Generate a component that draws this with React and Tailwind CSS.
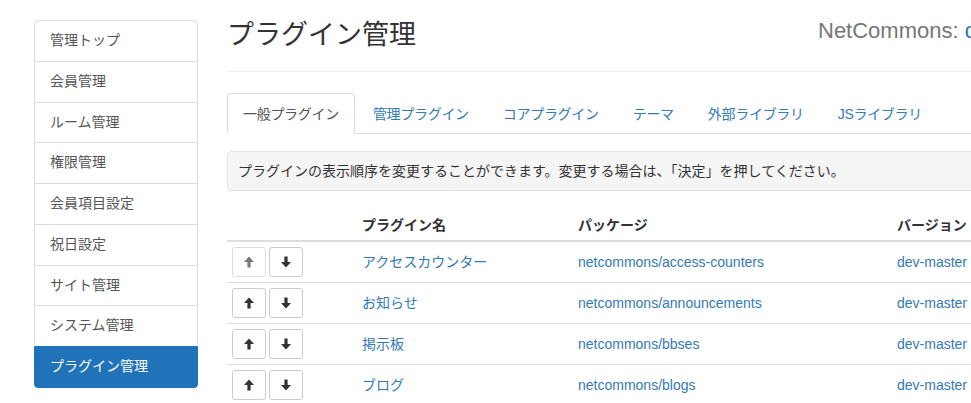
import React from 'react'

const menu = [
  '管理トップ',
  '会員管理',
  'ルーム管理',
  '権限管理',
  '会員項目設定',
  '祝日設定',
  'サイト管理',
  'システム管理',
  'プラグイン管理',
]

const tabs = ['一般プラグイン', '管理プラグイン', 'コアプラグイン', 'テーマ', '外部ライブラリ', 'JSライブラリ']

const plugins = [
  { name: 'アクセスカウンター', pkg: 'netcommons/access-counters', version: 'dev-master' },
  { name: 'お知らせ', pkg: 'netcommons/announcements', version: 'dev-master' },
  { name: '掲示板', pkg: 'netcommons/bbses', version: 'dev-master' },
  { name: 'ブログ', pkg: 'netcommons/blogs', version: 'dev-master' },
]

const ArrowIcon = ({ down }) => (
  <svg width="12" height="12" viewBox="0 0 12 12" className={down ? 'rotate-180' : ''}>
    <polygon points="6,0.5 11,6 7.6,6 7.6,11.5 4.4,11.5 4.4,6 1,6" fill="currentColor" />
  </svg>
)

const MoveButton = ({ down, disabled }) => (
  <button
    className={`w-[34px] h-[30px] flex items-center justify-center bg-white border border-[#ccc] rounded-[3px] text-[#333] ${
      disabled ? 'opacity-[0.65]' : ''
    }`}
  >
    <ArrowIcon down={down} />
  </button>
)

const App = () => {
  return (
    <div className="w-[971px] h-[403px] overflow-hidden bg-white text-[14px] leading-[20px] text-[#333] font-['Liberation_Sans','Noto_Sans_CJK_JP',sans-serif]">
      <div className="flex pt-[20px]">
        <aside className="ml-[34px] w-[164px] shrink-0">
          {menu.map((item, i) => {
            const active = i === menu.length - 1
            return (
              <div
                key={item}
                className={`relative px-[15px] py-[10px] leading-[19.75px] border ${i > 0 ? '-mt-px' : ''} ${
                  i === 0 ? 'rounded-t-[4px]' : ''
                } ${
                  active
                    ? 'z-10 rounded-b-[4px] bg-[#2072b9] border-[#2072b9] text-white'
                    : 'bg-white border-[#ddd] text-[#555]'
                }`}
              >
                {item}
              </div>
            )
          })}
        </aside>

        <main className="ml-[29px] w-[900px] shrink-0">
          <div className="flex items-start border-b border-[#eee] pb-[20px]">
            <h1 className="w-[591px] shrink-0 text-[27px] leading-[31px] font-normal text-[#333]">
              プラグイン管理
            </h1>
            <div className="-mt-px text-[22px] leading-[24px] text-[#777] whitespace-nowrap">
              NetCommons: <span className="text-[#337ab7]">dev-master</span>
            </div>
          </div>

          <ul className="mt-[21px] flex border-b border-[#ddd]">
            {tabs.map((tab, i) => (
              <li key={tab} className="-mb-px mr-[2px]">
                <a
                  className={`block px-[15px] pt-[10px] pb-[9px] leading-[20px] tracking-[-0.3px] border rounded-t-[4px] ${
                    i === 0
                      ? 'bg-white border-[#ddd] border-b-transparent text-[#555]'
                      : 'border-transparent text-[#337ab7]'
                  }`}
                >
                  {tab}
                </a>
              </li>
            ))}
          </ul>

          <div className="mt-[17px] px-[10px] py-[9px] bg-[#f5f5f5] border border-[#e3e3e3] rounded-[4px] whitespace-nowrap">
            プラグインの表示順序を変更することができます。変更する場合は、「決定」を押してください。
          </div>

          <table className="mt-[19px] w-[900px] border-collapse table-fixed">
            <thead>
              <tr className="border-b-2 border-[#ddd]">
                <th className="w-[130px] px-[5px] py-[5px]"></th>
                <th className="w-[216px] px-[5px] py-[5px] text-left font-bold">プラグイン名</th>
                <th className="w-[319px] px-[5px] py-[5px] text-left font-bold">パッケージ</th>
                <th className="px-[5px] py-[5px] text-left font-bold">バージョン</th>
              </tr>
            </thead>
            <tbody>
              {plugins.map((p, i) => (
                <tr key={p.pkg} className="border-t border-[#ddd]">
                  <td className="px-[5px] py-[5px]">
                    <div className="flex gap-[3px]">
                      <MoveButton disabled={i === 0} />
                      <MoveButton down />
                    </div>
                  </td>
                  <td className="px-[5px] py-[5px] text-[#337ab7]">{p.name}</td>
                  <td className="px-[5px] py-[5px] text-[#337ab7]">{p.pkg}</td>
                  <td className="px-[5px] py-[5px] text-[#337ab7]">{p.version}</td>
                </tr>
              ))}
            </tbody>
          </table>
        </main>
      </div>
    </div>
  )
}

export default App
